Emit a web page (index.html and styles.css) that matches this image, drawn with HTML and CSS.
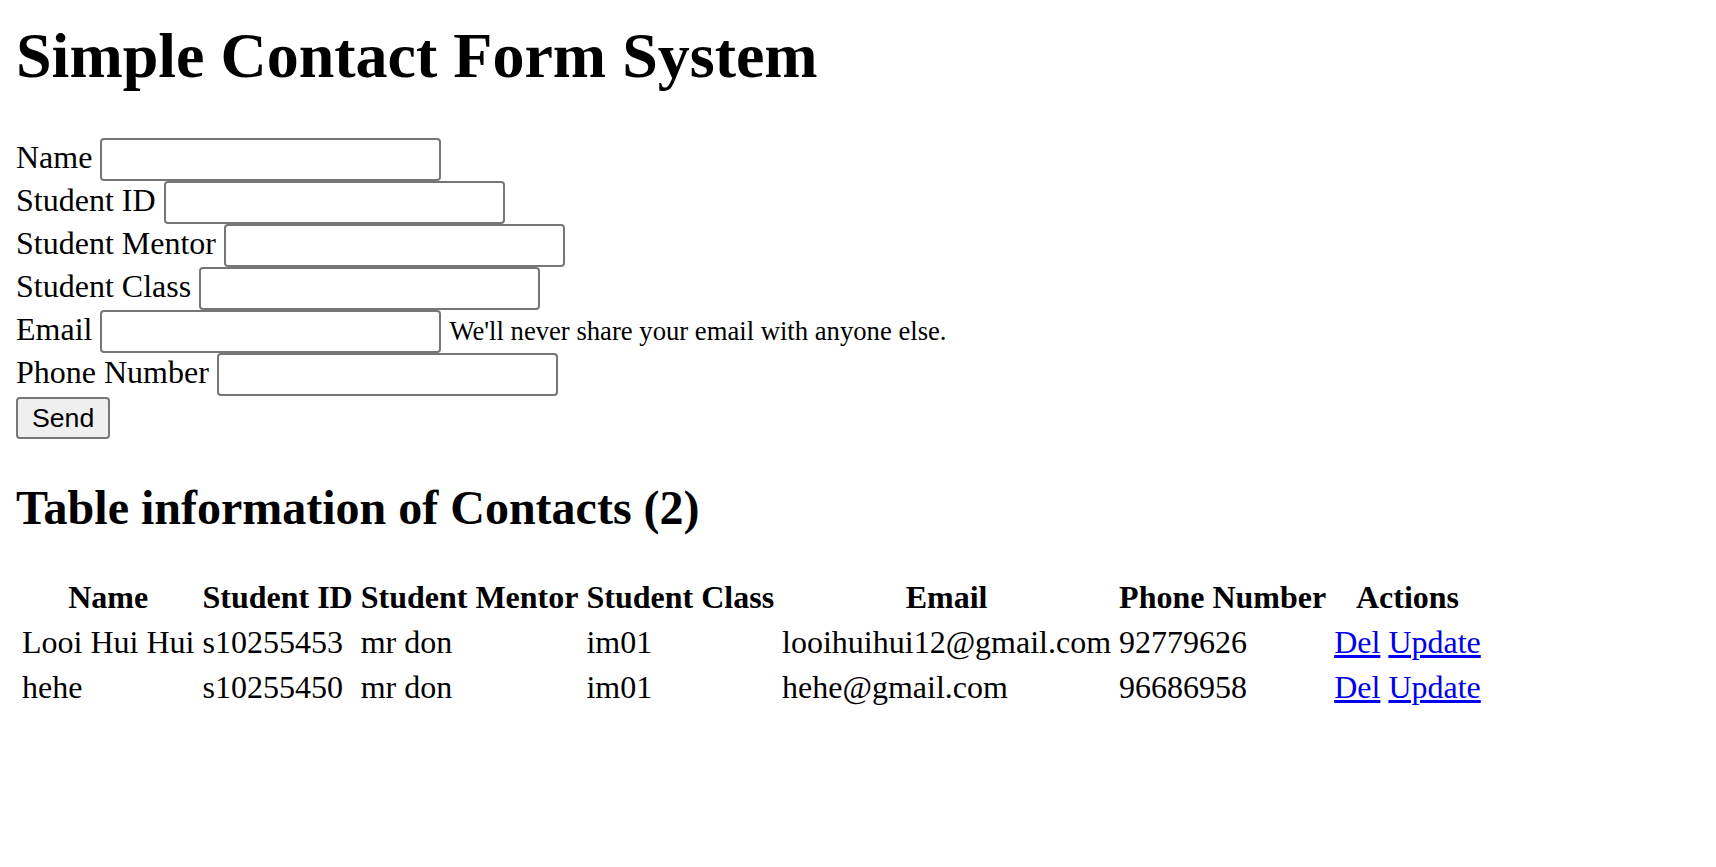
FILE: index.html
```html
<!DOCTYPE html>
<html lang="en">
<head>
<meta charset="utf-8">
<title>Simple Contact Form System</title>
<link rel="stylesheet" href="styles.css">
</head>
<body>
<h1 class="page-title">Simple Contact Form System</h1>
<form class="contact-form">
  <div class="form-row"><label class="form-label" for="name">Name</label><input class="text-input" type="text" id="name"></div>
  <div class="form-row"><label class="form-label" for="sid">Student ID</label><input class="text-input" type="text" id="sid"></div>
  <div class="form-row"><label class="form-label" for="mentor">Student Mentor</label><input class="text-input" type="text" id="mentor"></div>
  <div class="form-row"><label class="form-label" for="sclass">Student Class</label><input class="text-input" type="text" id="sclass"></div>
  <div class="form-row"><label class="form-label" for="email">Email</label><input class="text-input" type="email" id="email"><small class="form-hint">We'll never share your email with anyone else.</small></div>
  <div class="form-row"><label class="form-label" for="phone">Phone Number</label><input class="text-input" type="text" id="phone"></div>
  <div class="form-row submit-row"><button class="send-button" type="button">Send</button></div>
</form>
<h2 class="section-title">Table information of Contacts (2)</h2>
<table class="contacts-table">
  <thead>
    <tr><th>Name</th><th>Student ID</th><th>Student Mentor</th><th>Student Class</th><th>Email</th><th>Phone Number</th><th>Actions</th></tr>
  </thead>
  <tbody>
    <tr><td>Looi Hui Hui</td><td>s10255453</td><td>mr don</td><td>im01</td><td>looihuihui12@gmail.com</td><td>92779626</td><td><a href="#" class="action-link">Del</a> <a href="#" class="action-link">Update</a></td></tr>
    <tr><td>hehe</td><td>s10255450</td><td>mr don</td><td>im01</td><td>hehe@gmail.com</td><td>96686958</td><td><a href="#" class="action-link">Del</a> <a href="#" class="action-link">Update</a></td></tr>
  </tbody>
</table>
</body>
</html>
```

FILE: styles.css
```css
html {
  background: #ffffff;
}

body {
  margin: 0 16px 16px;
  font-family: "Liberation Serif", "Times New Roman", serif;
  font-size: 32px;
  color: #000000;
}

.page-title {
  font-size: 64px;
  font-weight: bold;
  margin: 19px 0 45px;
}

.contact-form {
  margin: 0;
}

.form-row {
  display: flex;
  align-items: baseline;
  gap: 8px;
}

.form-label {
  line-height: normal;
}

.text-input {
  box-sizing: border-box;
  width: 341px;
  height: 43px;
  padding: 4px 6px;
  border: 2px solid #767676;
  border-radius: 4px;
  background: #ffffff;
  font-family: "Liberation Sans", Arial, sans-serif;
  font-size: 26.67px;
  margin: 0;
}

.form-hint {
  font-size: 26.67px;
}

.submit-row {
  padding-top: 1px;
  height: 43px;
}

.send-button {
  box-sizing: border-box;
  height: 42px;
  padding: 0 14px;
  border: 2px solid #767676;
  border-radius: 4px;
  background: #efefef;
  color: #000000;
  font-family: "Liberation Sans", Arial, sans-serif;
  font-size: 26.67px;
  margin: 0;
}

.section-title {
  font-size: 48px;
  font-weight: bold;
  margin: 40px 0 38px;
}

.contacts-table {
  border-spacing: 4px;
}

.contacts-table th,
.contacts-table td {
  padding: 2px;
  font-size: 32px;
}

.contacts-table th {
  font-weight: bold;
  text-align: center;
}

.contacts-table td {
  text-align: left;
}

.action-link {
  color: #0000ee;
  text-decoration: underline;
}
```
